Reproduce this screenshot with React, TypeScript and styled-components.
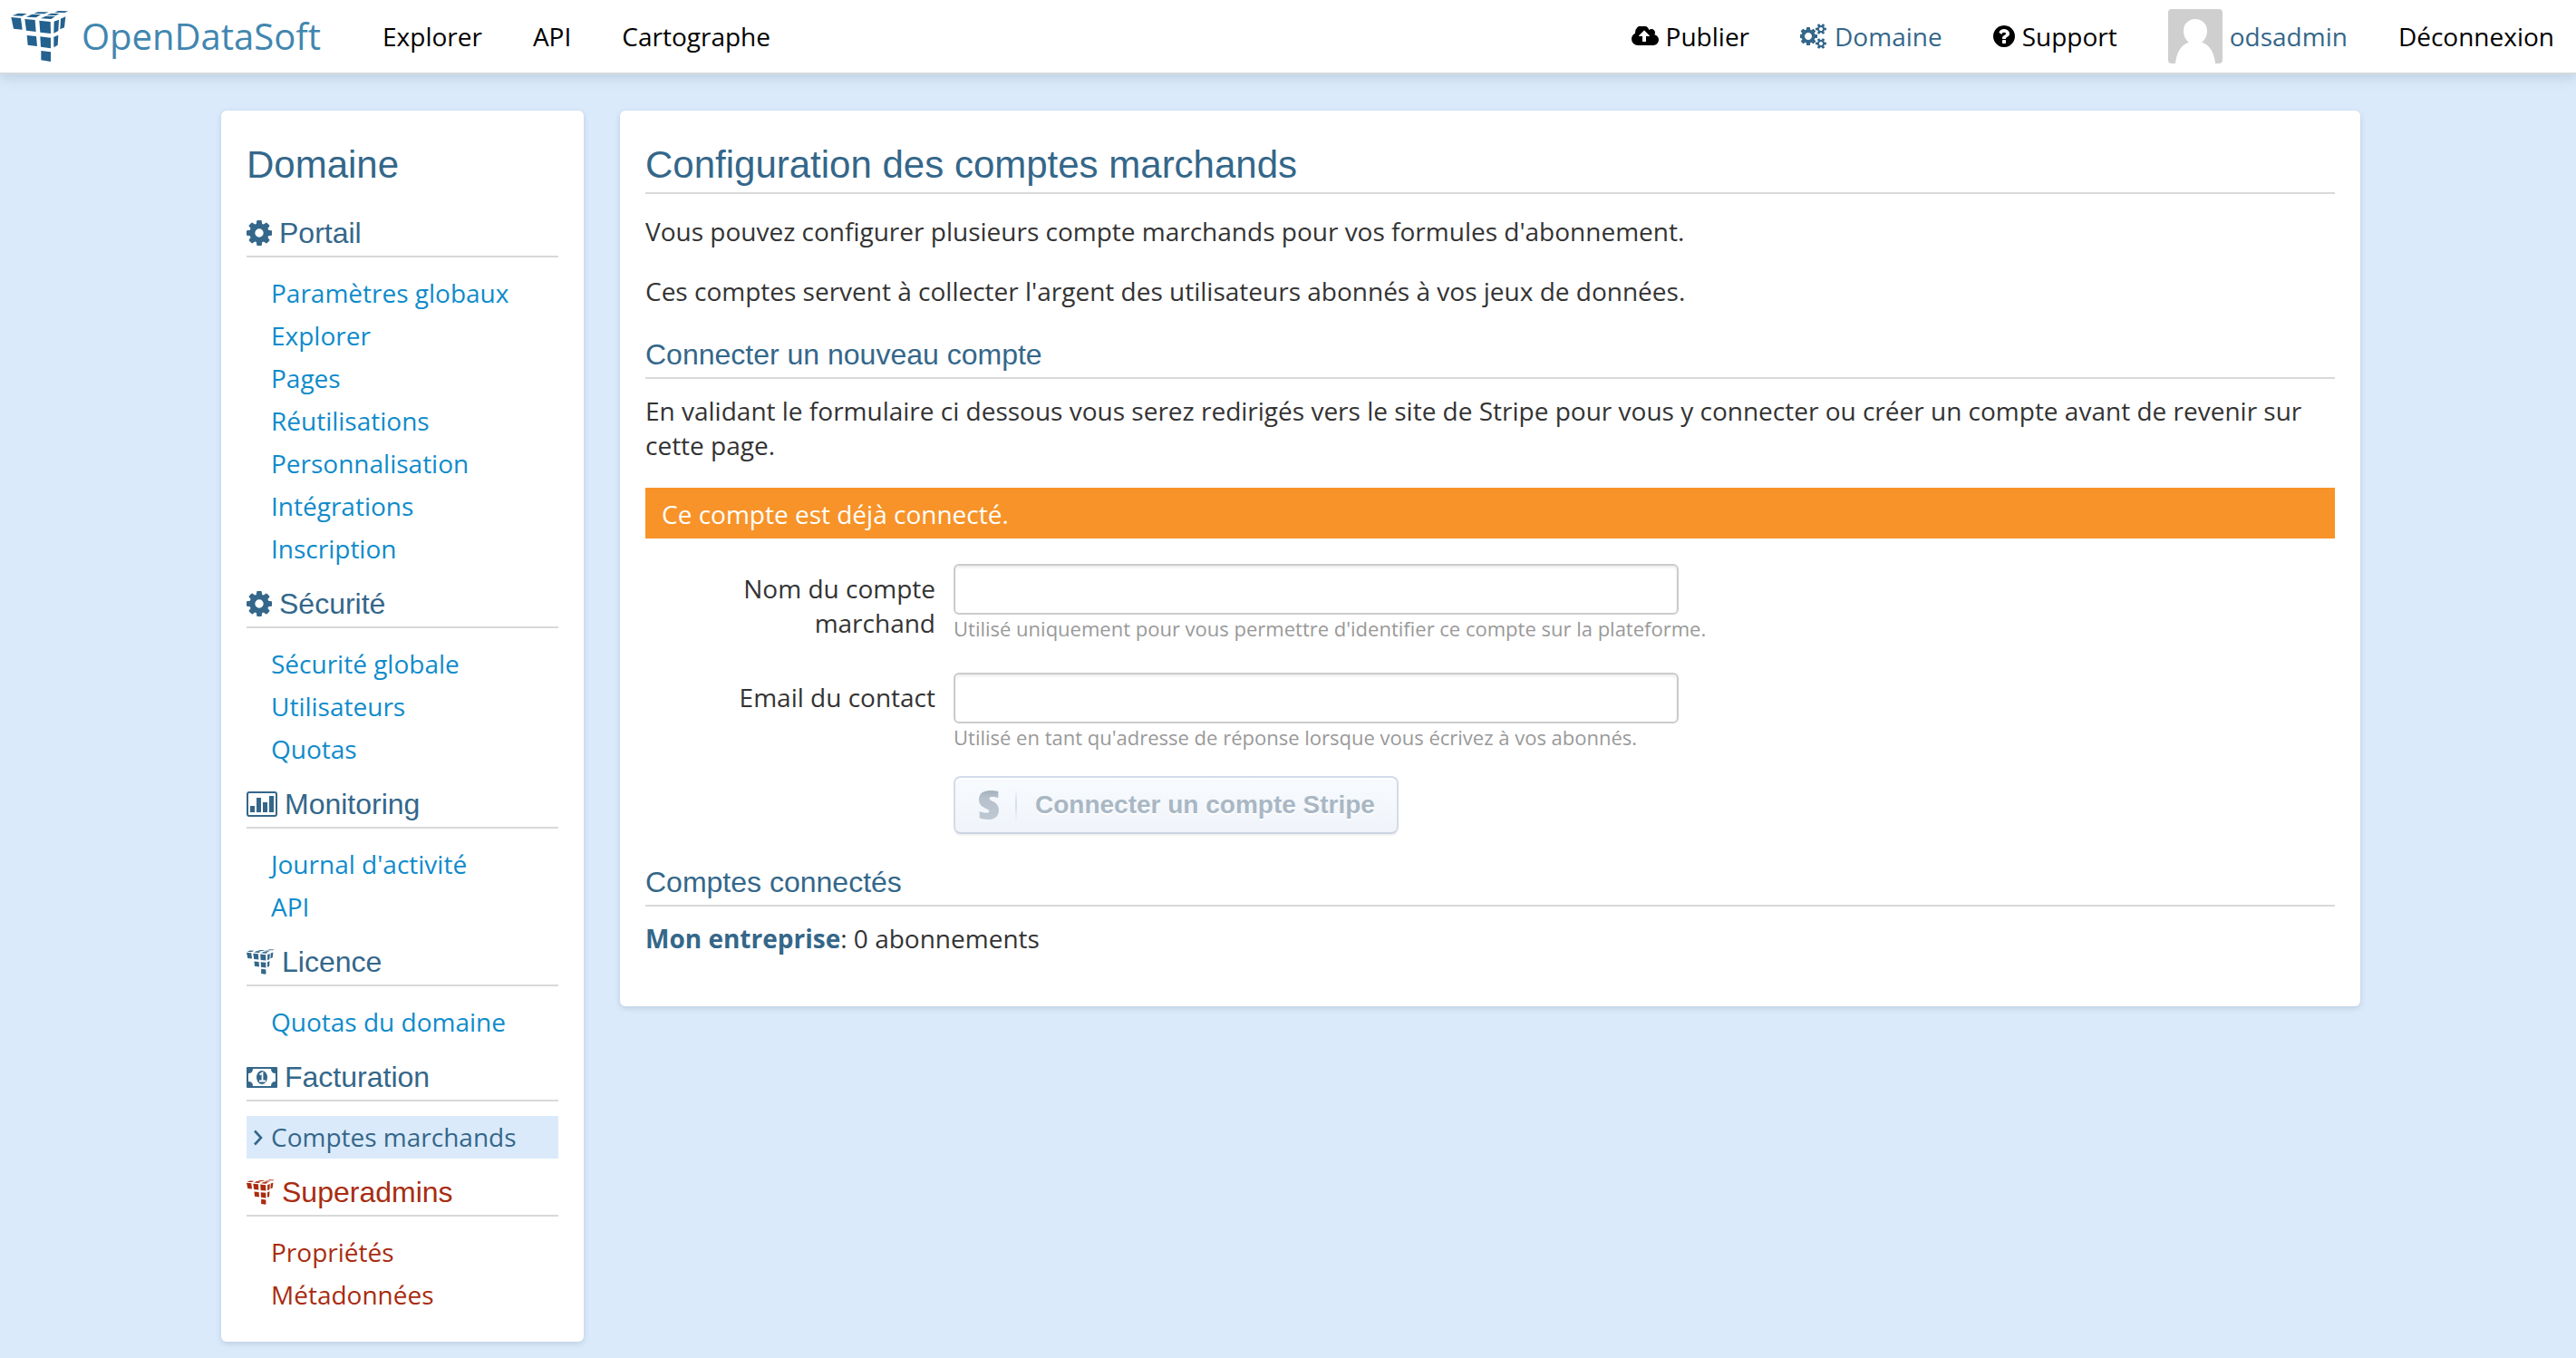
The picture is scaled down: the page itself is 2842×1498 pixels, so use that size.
import React from "react";
import styled, { createGlobalStyle } from "styled-components";

const colors = {
  page: "#dbeafa",
  navy: "#34678a",
  link: "#0f8bcb",
  danger: "#a92c10",
  rule: "#d9d9d9",
  text: "#333333",
  muted: "#999999",
};

const heading = `"Liberation Sans", Arial, sans-serif`;

const GlobalStyle = createGlobalStyle`
  * { box-sizing: border-box; }
  body {
    margin: 0;
    background: ${colors.page};
    color: ${colors.text};
    font: 400 28px/38px "Open Sans", sans-serif;
  }
  h1, h2, h3, p, ul { margin: 0; padding: 0; font-weight: 400; }
  ul { list-style: none; }
  a { text-decoration: none; color: inherit; }
  svg { display: block; flex: none; }
`;

/* ---------- icons ---------- */

type IconProps = { w: number; h: number };

const CogIcon = ({ w, h }: IconProps) => (
  <svg width={w} height={h} viewBox="128 128 1536 1536" fill="currentColor" aria-hidden="true">
    <path d="M1152 896q0-106-75-181t-181-75-181 75-75 181 75 181 181 75 181-75 75-181zm512-109v222q0 12-8 23t-20 13l-185 28q-19 54-39 91 35 50 107 138 10 12 10 25t-9 23q-27 37-99 108t-94 71q-12 0-26-9l-138-108q-44 23-91 38-16 136-29 186-7 28-36 28h-222q-14 0-24.5-8.5t-11.5-21.5l-28-184q-49-16-90-37l-141 107q-10 9-25 9-14 0-25-11-126-114-165-168-7-10-7-23 0-12 8-23 15-21 51-66.5t54-70.5q-27-50-41-99l-183-27q-13-2-21-12.5t-8-23.5v-222q0-12 8-23t19-13l186-28q14-46 39-92-40-57-107-138-10-12-10-24 0-10 9-23 26-36 98.5-107.5t94.5-71.5q13 0 26 10l138 107q44-23 91-38 16-136 29-186 7-28 36-28h222q14 0 24.5 8.5t11.5 21.5l28 184q49 16 90 37l142-107q9-9 24-9 13 0 25 10 129 119 165 170 7 8 7 22 0 12-8 23-15 21-51 66.5t-54 70.5q26 50 41 98l183 28q13 2 21 12.5t8 23.5z" />
  </svg>
);

const CogsIcon = ({ w, h }: IconProps) => (
  <svg width={w} height={h} viewBox="0 0 1920 1792" fill="currentColor" aria-hidden="true">
    <path d="M832 896q0-106-75-181t-181-75-181 75-75 181 75 181 181 75 181-75 75-181zm768 512q0-52-38-90t-90-38-90 38-38 90q0 53 37.5 90.5t90.5 37.5 90.5-37.5 37.5-90.5zm0-1024q0-52-38-90t-90-38-90 38-38 90q0 53 37.5 90.5t90.5 37.5 90.5-37.5 37.5-90.5zm-384 421v185q0 10-7 19.5t-16 10.5l-155 24q-11 35-32 76 34 48 90 115 7 11 7 20 0 12-7 19-23 30-82.5 89.5t-78.5 59.5q-11 0-21-7l-115-90q-37 19-77 31-11 108-23 155-7 24-30 24h-186q-11 0-20-7.5t-10-17.5l-23-153q-34-10-75-31l-118 89q-7 7-20 7-11 0-21-8-144-133-144-160 0-9 7-19 10-14 41-53t47-61q-23-44-35-82l-152-24q-10-1-17-9.500t-7-19.500v-185q0-10 7-19.500t16-10.500l155-24q11-35 32-76-34-48-90-115-7-11-7-20 0-12 7-20 22-30 82-89t79-59q11 0 21 7l115 90q34-18 77-32 11-108 23-154 7-24 30-24h186q11 0 20 7.500t10 17.500l23 153q34 10 75 31l118-89q8-7 20-7 11 0 21 8 144 133 144 160 0 8-7 19-12 16-42 54t-45 60q23 48 34 82l152 23q10 2 17 10.500t7 19.500zm640 533v140q0 16-149 31-12 27-30 52 51 113 51 138 0 4-4 7-122 71-124 71-8 0-46-47t-52-68q-20 2-30 2t-30-2q-14 21-52 68t-46 47q-2 0-124-71-4-3-4-7 0-25 51-138-18-25-30-52-149-15-149-31v-140q0-16 149-31 13-29 30-52-51-113-51-138 0-4 4-7 4-2 35-20t59-34 30-16q8 0 46 46.500t52 67.500q20-2 30-2t30 2q51-71 92-112l6-2q4 0 124 70 4 3 4 7 0 25-51 138 17 23 30 52 149 15 149 31zm0-1024v140q0 16-149 31-12 27-30 52 51 113 51 138 0 4-4 7-122 71-124 71-8 0-46-47t-52-68q-20 2-30 2t-30-2q-14 21-52 68t-46 47q-2 0-124-71-4-3-4-7 0-25 51-138-18-25-30-52-149-15-149-31v-140q0-16 149-31 13-29 30-52-51-113-51-138 0-4 4-7 4-2 35-20t59-34 30-16q8 0 46 46.500t52 67.500q20-2 30-2t30 2q51-71 92-112l6-2q4 0 124 70 4 3 4 7 0 25-51 138 17 23 30 52 149 15 149 31z" />
  </svg>
);

const CloudUploadIcon = ({ w, h }: IconProps) => (
  <svg width={w} height={h} viewBox="0 256 1920 1280" fill="currentColor" aria-hidden="true">
    <path d="M1280 864q0-14-9-23l-352-352q-9-9-23-9t-23 9l-351 351q-10 12-10 24 0 14 9 23t23 9h224v352q0 13 9.500 22.500t22.500 9.500h192q13 0 22.500-9.500t9.500-22.500v-352h224q13 0 22.500-9.500t9.500-22.500zm640 288q0 159-112.500 271.500t-271.500 112.500h-1088q-185 0-316.500-131.500t-131.500-316.500q0-130 70-240t188-165q-2-30-2-43 0-212 150-362t362-150q156 0 285.500 87t188.500 231q71-62 166-62 106 0 181 75t75 181q0 76-41 138 130 31 213.500 135.500t83.500 238.500z" />
  </svg>
);

const QuestionIcon = ({ w, h }: IconProps) => (
  <svg width={w} height={h} viewBox="128 128 1536 1536" fill="currentColor" aria-hidden="true">
    <path d="M1024 1376v-192q0-14-9-23t-23-9h-192q-14 0-23 9t-9 23v192q0 14 9 23t23 9h192q14 0 23-9t9-23zm256-672q0-88-55.500-163t-138.500-116-170-41q-243 0-371 213-15 24 8 42l132 100q7 6 19 6 16 0 25-12 53-68 86-92 34-24 86-24 48 0 85.500 26t37.500 59q0 38-20 61t-68 45q-63 28-115.500 86.500t-52.500 125.500v36q0 14 9 23t23 9h192q14 0 23-9t9-23q0-19 21.500-49.500t54.500-49.500q32-18 49-28.500t46-35 44.500-48 28-60.500 12.500-81zm384 192q0 209-103 385.500t-279.500 279.500-385.500 103-385.500-103-279.500-279.500-103-385.500 103-385.500 279.500-279.500 385.500-103 385.500 103 279.500 279.500 103 385.500z" />
  </svg>
);

const ChartIcon = ({ w, h }: IconProps) => (
  <svg width={w} height={h} viewBox="0 0 34 28" fill="currentColor" aria-hidden="true">
    <rect x="1" y="1" width="32" height="26" rx="2" fill="none" stroke="currentColor" strokeWidth="2" />
    <path d="M4 16h5v7H4zM11 7h5v16h-5zM18 12h5v11h-5zM25 5h5v18h-5z" />
  </svg>
);

const MoneyIcon = ({ w, h }: IconProps) => (
  <svg width={w} height={h} viewBox="0 0 34 23" fill="currentColor" aria-hidden="true">
    <path
      fillRule="evenodd"
      d="M1 0h32q1 0 1 1v21q0 1-1 1H1q-1 0-1-1V1q0-1 1-1zM7 2q0 5-5 5v9q5 0 5 5h20q0-5 5-5V7q-5 0-5-5z"
    />
    <ellipse cx="17" cy="11.500" rx="6" ry="7.500" />
    <path d="M14.500 8.500L17.500 6.500V15M14 15.500h7" fill="none" stroke="#fff" strokeWidth="1.800" />
  </svg>
);

const ChevronIcon = ({ w, h }: IconProps) => (
  <svg width={w} height={h} viewBox="0 0 10 18" fill="none" stroke="currentColor" strokeWidth="2.600" aria-hidden="true">
    <path d="M1 1.500L8 9L1 16.500" />
  </svg>
);

const CubesIcon = ({ w, h }: IconProps) => (
  <svg width={w} height={h} viewBox="0 0 190 168" fill="currentColor" aria-hidden="true">
    <path d="M0 21L32 24L37 62L8 59zM45 27L79 30L82 69L50 65zM93 32L130 36L131 75L96 71zM52 81L83 84L86 117L55 113zM96 85L131 89L131 124L98 119zM99 132L131 136L131 168L99 163z" />
    <path d="M142 35L158 29L156 66L141 74zM164 26L180 19L176 55L162 61zM141 86L156 80L154 113L141 121z" />
    <path d="M23 8L52 9L36 17L4 16zM69 11L98 13L82 22L50 20zM115 17L146 18L132 27L98 25zM88 4L124 4L109 10L75 9zM133 8L160 9L148 15L118 14zM155 0L189 1L177 6L144 5z" />
  </svg>
);

const AvatarIcon = () => (
  <svg width="60" height="60" viewBox="0 0 60 60" aria-hidden="true">
    <rect width="60" height="60" rx="4" fill="#cfcfcf" />
    <path
      fill="#fff"
      d="M30 11c7.500 0 13 5.500 13 13 0 5-2 10-6 12.500 9 3 14 12 15 23.500H8c1-11.500 6-20.500 15-23.500-4-2.500-6-7.500-6-12.500 0-7.500 5.500-13 13-13z"
    />
  </svg>
);

const StripeMark = () => (
  <svg width="22" height="32" viewBox="0 0 66 96" aria-hidden="true">
    <defs>
      <linearGradient id="stripeFill" x1="0" y1="0" x2="0" y2="1">
        <stop offset="0" stopColor="#a3b0bd" />
        <stop offset="0.250" stopColor="#b6c1cc" />
        <stop offset="1" stopColor="#bec8d3" />
      </linearGradient>
    </defs>
    <path
      fill="url(#stripeFill)"
      d="M64 3V25C56 22 50 21 44 21C38 21 35 23 35 26C35 37 66 34 66 65C66 85 52 96 30 96C19 96 9 94 2 91V69C10 72 17 74 25 74C31 74 34 73 34 69C34 58 0 60 0 30C0 11 14 0 37 0C47 0 56 1 64 3z"
    />
  </svg>
);

/* ---------- top bar ---------- */

const TopBar = styled.header`
  display: flex;
  align-items: center;
  gap: 68px;
  min-height: 82px;
  padding: 0 24px 0 12px;
  background: #fff;
  border-bottom: 2px solid #d5dae0;
  box-shadow: 0 4px 12px rgba(60, 90, 120, 0.18);
`;

const Brand = styled.a`
  display: flex;
  align-items: center;
  gap: 14px;
  color: #4186b0;
  font-size: 40px;
  line-height: 50px;

  svg { color: #23618f; }
`;

const NavGroup = styled.nav<{ $end?: boolean }>`
  display: flex;
  align-items: center;
  gap: 56px;
  margin-left: ${(p) => (p.$end ? "auto" : "0")};
`;

const NavLink = styled.a<{ $active?: boolean }>`
  display: flex;
  align-items: center;
  gap: 8px;
  color: ${(p) => (p.$active ? colors.navy : "#000")};
`;

/* ---------- page ---------- */

const Layout = styled.div`
  display: grid;
  grid-template-columns: 400px minmax(0, 1fr);
  align-items: start;
  gap: 40px;
  padding: 40px 238px 16px 244px;
`;

const Panel = styled.div`
  padding: 28px;
  background: #fff;
  border-radius: 6px;
  box-shadow: 0 2px 6px rgba(60, 90, 130, 0.2);
`;

const Title = styled.h1<{ $ruled?: boolean }>`
  padding-top: 2px;
  color: ${colors.navy};
  font-family: ${heading};
  font-size: 42px;
  line-height: 60px;
  border-bottom: ${(p) => (p.$ruled ? `2px solid ${colors.rule}` : "none")};
  margin-bottom: ${(p) => (p.$ruled ? "22px" : "25px")};
`;

const SectionTitle = styled.h2<{ $danger?: boolean }>`
  display: flex;
  align-items: center;
  gap: 8px;
  padding-bottom: 5px;
  margin-bottom: 16px;
  border-bottom: 2px solid ${colors.rule};
  color: ${(p) => (p.$danger ? colors.danger : colors.navy)};
  font-family: ${heading};
  font-size: 32px;
  line-height: 40px;
`;

const SideNav = styled.nav`
  display: flex;
  flex-direction: column;
  gap: 17px;
`;

const SideLink = styled.a<{ $active?: boolean; $danger?: boolean }>`
  display: flex;
  align-items: center;
  line-height: 47px;
  background: ${(p) => (p.$active ? colors.page : "transparent")};
  color: ${(p) => (p.$danger ? colors.danger : p.$active ? colors.navy : colors.link)};
`;

const Marker = styled.span`
  display: flex;
  width: 27px;
  padding-left: 8px;
`;

const Block = styled.section`
  & + & { margin-top: 31px; }
`;

const Text = styled.p`
  & + & { margin-top: 28px; }
`;

const Account = styled.strong`
  color: ${colors.navy};
  font-weight: 700;
`;

const Alert = styled.div`
  margin: 28px 0;
  padding: 10px 18px 8px;
  background: #f79328;
  color: #fff;
`;

const Form = styled.form`
  display: flex;
  flex-direction: column;
  gap: 34px;
`;

const Field = styled.div`
  display: grid;
  grid-template-columns: 320px minmax(0, 1fr);
  gap: 20px;
`;

const Label = styled.label`
  padding-top: 8px;
  text-align: right;
`;

const Input = styled.input`
  display: block;
  width: 100%;
  max-width: 800px;
  height: 56px;
  padding: 8px 12px;
  border: 2px solid #ccc;
  border-radius: 6px;
  box-shadow: inset 0 2px 3px rgba(0, 0, 0, 0.08);
  background: #fff;
  color: ${colors.text};
  font: inherit;
`;

const Help = styled.p`
  color: ${colors.muted};
  font-size: 22px;
  line-height: 30px;
`;

const Actions = styled.div`
  padding-left: 340px;
  margin: -6px 0 2px;
`;

const StripeButton = styled.button`
  display: flex;
  align-items: center;
  height: 64px;
  padding: 0 24px 0 26px;
  border: 2px solid #d3dce8;
  border-bottom-color: #c9d3e2;
  border-radius: 8px;
  background: linear-gradient(#f8fbfe, #f0f4fa);
  box-shadow: 0 2px 1px rgba(0, 0, 0, 0.05), inset 0 2px 0 #fff;
  color: #a9b7c4;
  font: 700 28px/34px ${heading};
  text-shadow: 0 2px 0 #fff;
`;

const Divider = styled.span`
  width: 2px;
  height: 36px;
  margin: 0 20px 0 18px;
  background: linear-gradient(transparent, #d5dde8, transparent);
`;

const Connected = styled.div`
  padding-bottom: 28px;
`;

/* ---------- data ---------- */

type Section = {
  title: string;
  icon: React.ReactNode;
  links: string[];
  danger?: boolean;
};

const sections: Section[] = [
  {
    title: "Portail",
    icon: <CogIcon w={28} h={28} />,
    links: ["Paramètres globaux", "Explorer", "Pages", "Réutilisations", "Personnalisation", "Intégrations", "Inscription"],
  },
  { title: "Sécurité", icon: <CogIcon w={28} h={28} />, links: ["Sécurité globale", "Utilisateurs", "Quotas"] },
  { title: "Monitoring", icon: <ChartIcon w={34} h={28} />, links: ["Journal d'activité", "API"] },
  { title: "Licence", icon: <CubesIcon w={31} h={28} />, links: ["Quotas du domaine"] },
  { title: "Facturation", icon: <MoneyIcon w={34} h={23} />, links: ["Comptes marchands"] },
  { title: "Superadmins", icon: <CubesIcon w={31} h={28} />, links: ["Propriétés", "Métadonnées"], danger: true },
];

const activeLink = "Comptes marchands";

export default function App() {
  return (
    <>
      <GlobalStyle />
      <TopBar>
        <Brand href="#">
          <CubesIcon w={64} h={56} />
          OpenDataSoft
        </Brand>
        <NavGroup>
          <NavLink href="#">Explorer</NavLink>
          <NavLink href="#">API</NavLink>
          <NavLink href="#">Cartographe</NavLink>
        </NavGroup>
        <NavGroup $end>
          <NavLink href="#"><CloudUploadIcon w={30} h={22} />Publier</NavLink>
          <NavLink href="#" $active><CogsIcon w={30} h={28} />Domaine</NavLink>
          <NavLink href="#"><QuestionIcon w={24} h={24} />Support</NavLink>
          <NavLink href="#" $active><AvatarIcon />odsadmin</NavLink>
          <NavLink href="#">Déconnexion</NavLink>
        </NavGroup>
      </TopBar>

      <Layout>
        <Panel as="aside">
          <Title as="h2">Domaine</Title>
          <SideNav>
            {sections.map((s) => (
              <section key={s.title}>
                <SectionTitle as="h3" $danger={s.danger}>
                  {s.icon}
                  {s.title}
                </SectionTitle>
                <ul>
                  {s.links.map((l) => (
                    <li key={l}>
                      <SideLink href="#" $danger={s.danger} $active={l === activeLink}>
                        <Marker>{l === activeLink && <ChevronIcon w={10} h={18} />}</Marker>
                        {l}
                      </SideLink>
                    </li>
                  ))}
                </ul>
              </section>
            ))}
          </SideNav>
        </Panel>

        <Panel as="main">
          <Block>
            <Title $ruled>Configuration des comptes marchands</Title>
            <Text>Vous pouvez configurer plusieurs compte marchands pour vos formules d'abonnement.</Text>
            <Text>Ces comptes servent à collecter l'argent des utilisateurs abonnés à vos jeux de données.</Text>
          </Block>

          <Block>
            <SectionTitle>Connecter un nouveau compte</SectionTitle>
            <Text>
              En validant le formulaire ci dessous vous serez redirigés vers le site de Stripe pour vous y connecter ou
              créer un compte avant de revenir sur cette page.
            </Text>
            <Alert role="alert">Ce compte est déjà connecté.</Alert>
            <Form onSubmit={(e) => e.preventDefault()}>
              <Field>
                <Label htmlFor="account-name">Nom du compte marchand</Label>
                <div>
                  <Input id="account-name" type="text" />
                  <Help>Utilisé uniquement pour vous permettre d'identifier ce compte sur la plateforme.</Help>
                </div>
              </Field>
              <Field>
                <Label htmlFor="contact-email">Email du contact</Label>
                <div>
                  <Input id="contact-email" type="email" />
                  <Help>Utilisé en tant qu'adresse de réponse lorsque vous écrivez à vos abonnés.</Help>
                </div>
              </Field>
              <Actions>
                <StripeButton type="submit" disabled>
                  <StripeMark />
                  <Divider />
                  Connecter un compte Stripe
                </StripeButton>
              </Actions>
            </Form>
          </Block>

          <Block>
            <SectionTitle>Comptes connectés</SectionTitle>
            <Connected>
              <Account>Mon entreprise</Account>: 0 abonnements
            </Connected>
          </Block>
        </Panel>
      </Layout>
    </>
  );
}
